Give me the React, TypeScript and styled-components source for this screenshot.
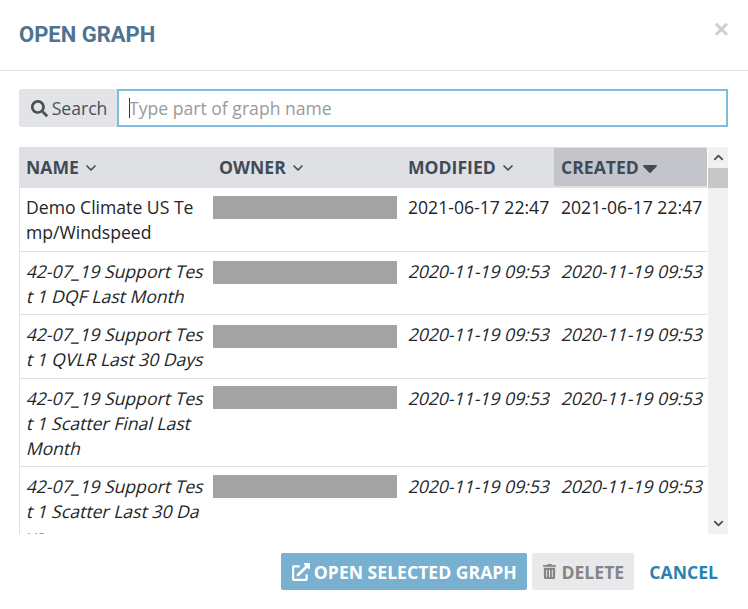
import { createGlobalStyle } from "styled-components";
import styled from "styled-components";
import { FaCaretDown, FaExternalLinkAlt, FaSearch, FaTrashAlt } from "react-icons/fa";
import { FiChevronDown, FiChevronUp } from "react-icons/fi";

interface GraphRow {
  id: number;
  // the name is wrapped by hand, the slanted rows skew line by line
  lines: string[];
  ownerTop: number;
  modified: string;
  created: string;
  shared?: boolean;
}

const rows: GraphRow[] = [
  { id: 1, lines: ["Demo Climate US Te", "mp/Windspeed"], ownerTop: 8, modified: "2021-06-17 22:47", created: "2021-06-17 22:47" },
  { id: 2, lines: ["42-07_19 Support Tes", "t 1 DQF Last Month"], ownerTop: 9.5, modified: "2020-11-19 09:53", created: "2020-11-19 09:53", shared: true },
  { id: 3, lines: ["42-07_19 Support Tes", "t 1 QVLR Last 30 Days"], ownerTop: 10, modified: "2020-11-19 09:53", created: "2020-11-19 09:53", shared: true },
  { id: 4, lines: ["42-07_19 Support Tes", "t 1 Scatter Final Last", "Month"], ownerTop: 7.5, modified: "2020-11-19 09:53", created: "2020-11-19 09:53", shared: true },
  { id: 5, lines: ["42-07_19 Support Tes", "t 1 Scatter Last 30 Da", "ys"], ownerTop: 8, modified: "2020-11-19 09:53", created: "2020-11-19 09:53", shared: true },
];

const App = () => {
  return (
    <Modal>
      <GlobalStyle />
      <Header>
        <Title>OPEN GRAPH</Title>
        <Close>×</Close>
      </Header>
      <Body>
        <SearchRow>
          <SearchLabel>
            <FaSearch size={17} />
            Search
          </SearchLabel>
          <SearchInput>
            <Caret />
            Type part of graph name
          </SearchInput>
        </SearchRow>
        <TableWrap>
          <TableScroll>
            <Table>
              <colgroup>
                <col style={{ width: 194 }} />
                <col style={{ width: 188 }} />
                <col style={{ width: 153 }} />
                <col style={{ width: 153 }} />
              </colgroup>
              <thead>
                <tr>
                  <HeadCell>
                    NAME <FiChevronDown size={16} strokeWidth={2.5} />
                  </HeadCell>
                  <HeadCell>
                    OWNER <FiChevronDown size={16} strokeWidth={2.5} />
                  </HeadCell>
                  <HeadCell>
                    MODIFIED <FiChevronDown size={16} strokeWidth={2.5} />
                  </HeadCell>
                  <HeadCell $active>
                    CREATED <SortCaret size={24} />
                  </HeadCell>
                </tr>
              </thead>
              <tbody>
                {rows.map((row) => (
                  <tr key={row.id}>
                    <TextCell>
                      {row.lines.map((line) => (
                        <CellLine key={line} $shared={row.shared}>
                          {line}
                        </CellLine>
                      ))}
                    </TextCell>
                    <OwnerCell $top={row.ownerTop}>
                      <Redacted />
                    </OwnerCell>
                    <TextCell>
                      <CellLine $shared={row.shared}>{row.modified}</CellLine>
                    </TextCell>
                    <TextCell>
                      <CellLine $shared={row.shared}>{row.created}</CellLine>
                    </TextCell>
                  </tr>
                ))}
              </tbody>
            </Table>
          </TableScroll>
          <ScrollBar>
            <ScrollUp>
              <FiChevronUp size={15} strokeWidth={3} />
            </ScrollUp>
            <Thumb />
            <ScrollDown>
              <FiChevronDown size={15} strokeWidth={3} />
            </ScrollDown>
          </ScrollBar>
        </TableWrap>
      </Body>
      <Footer>
        <PrimaryButton>
          <FaExternalLinkAlt size={18} />
          OPEN SELECTED GRAPH
        </PrimaryButton>
        <DeleteButton>
          <FaTrashAlt size={15} />
          DELETE
        </DeleteButton>
        <CancelButton>CANCEL</CancelButton>
      </Footer>
    </Modal>
  );
};

export default App;

const GlobalStyle = createGlobalStyle`
  html, body {
    margin: 0;
    padding: 0;
    background: #fff;
  }
`;

const Modal = styled.div`
  width: 748px;
  height: 609px;
  display: flex;
  flex-direction: column;
  overflow: hidden;
  font-family: "Open Sans", sans-serif;
  font-size: 17.6px;
  color: #212529;
  background: #fff;
`;

const Header = styled.div`
  height: 70px;
  box-sizing: content-box;
  display: flex;
  justify-content: space-between;
  align-items: center;
  padding: 0 20px;
  border-bottom: 1px solid #e5e5e5;
`;

const Title = styled.h5`
  margin: 0 0 2px -1px;
  font-family: Roboto, sans-serif;
  font-size: 22px;
  font-weight: 700;
  color: #4f7391;
`;

const Close = styled.span`
  font-family: "Liberation Sans", sans-serif;
  font-size: 26px;
  font-weight: 700;
  line-height: 1;
  color: #cfcfcf;
  margin: -12px -1px 0 0;
`;

const Body = styled.div`
  padding: 18px 20px 0 19px;
  display: flex;
  flex-direction: column;
  gap: 20px;
`;

const SearchRow = styled.div`
  display: flex;
  height: 38px;
`;

const SearchLabel = styled.div`
  width: 98px;
  box-sizing: border-box;
  padding-left: 2px;
  display: flex;
  align-items: center;
  justify-content: center;
  gap: 4px;
  color: #495057;
  background: #e2e4e7;
  border-radius: 3px 0 0 3px;
`;

const SearchInput = styled.div`
  flex: 1;
  display: flex;
  align-items: center;
  padding-left: 10px;
  color: #9a9a9a;
  border: 2px solid #7dbde0;
`;

const Caret = styled.span`
  width: 1px;
  height: 20px;
  background: #333;
  margin-right: -1px;
`;

const TableWrap = styled.div`
  display: flex;
  height: 387px;
`;

const TableScroll = styled.div`
  width: 689px;
  overflow: hidden;
  border-left: 1px solid #dee2e6;
  box-sizing: border-box;
`;

const Table = styled.table`
  width: 688px;
  margin-left: -1px;
  table-layout: fixed;
  border-collapse: separate;
  border-spacing: 0;
`;

const HeadCell = styled.th<{ $active?: boolean }>`
  height: 41px;
  padding: 0 7px 1px;
  box-sizing: border-box;
  text-align: left;
  white-space: nowrap;
  font-weight: 700;
  color: #3f4c57;
  background: ${(p) => (p.$active ? "#c3c5ca" : "#dfe0e4")};
  box-shadow: ${(p) => (p.$active ? "inset 0 1px 0 #dfe0e4, inset 0 -2px 0 #dfe0e4" : "none")};

  &:nth-child(2) {
    padding-left: 6px;
  }

  svg {
    vertical-align: -2px;
  }
`;

const SortCaret = styled(FaCaretDown)`
  margin: -8px 0 -8px -5px;
  vertical-align: 2px !important;
`;

const TextCell = styled.td`
  padding: 7px 0 5.5px 7px;
  vertical-align: top;
  line-height: 25px;
  white-space: nowrap;
  border-bottom: 1px solid #dee2e6;
`;

// the original slants the upright face, so it keeps the upright widths
const CellLine = styled.span<{ $shared?: boolean }>`
  display: block;
  transform-origin: 0 70%;
  transform: ${(p) => (p.$shared ? "skewX(-14deg)" : "none")};
`;

const OwnerCell = styled.td<{ $top: number }>`
  padding: ${(p) => p.$top}px 4px 0 0;
  vertical-align: top;
  border-bottom: 1px solid #dee2e6;
`;

const Redacted = styled.div`
  height: 23px;
  background: #a3a3a3;
`;

const ScrollBar = styled.div`
  width: 20px;
  height: 100%;
  display: flex;
  flex-direction: column;
  background: #f1f1f1;
`;

const ScrollUp = styled.div`
  height: 21px;
  display: flex;
  align-items: center;
  justify-content: center;
  color: #505050;
`;

const Thumb = styled.div`
  height: 20px;
  background: #c8c8c8;
`;

const ScrollDown = styled.div`
  margin-top: auto;
  height: 21px;
  display: flex;
  align-items: center;
  justify-content: center;
  color: #505050;
`;

const Footer = styled.div`
  display: flex;
  justify-content: flex-end;
  align-items: center;
  gap: 5px;
  padding: 19px 19px 0 0;
`;

const BaseButton = styled.div`
  height: 37px;
  display: flex;
  align-items: center;
  gap: 4px;
  border-radius: 2px;
  font-weight: 700;
`;

const PrimaryButton = styled(BaseButton)`
  width: 246px;
  justify-content: center;
  color: #fff;
  background: #79afcf;
`;

const DeleteButton = styled(BaseButton)`
  width: 102px;
  justify-content: center;
  color: #858585;
  background: #e9e9eb;
`;

const CancelButton = styled(BaseButton)`
  padding: 0 11px 0 10px;
  color: #2a82b3;
`;
